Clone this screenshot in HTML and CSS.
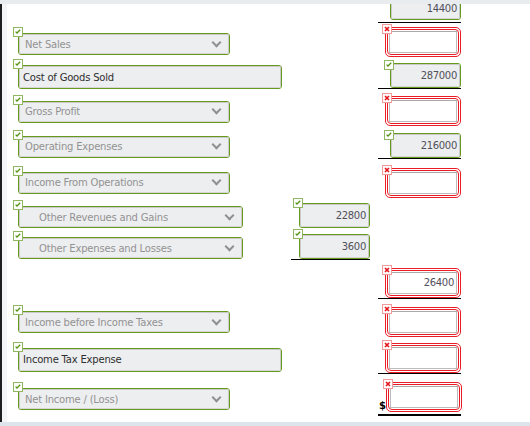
FILE: index.html
```html
<!DOCTYPE html>
<html>
<head>
<meta charset="utf-8">
<link rel="stylesheet" href="styles.css">
</head>
<body>
<div class="topbar"></div>
<div class="frame">
  <div class="sheet">
    <!-- row 0 -->
    <div class="c1"></div>
    <div class="c2"></div>
    <div class="c3 ul clip"><div class="fld"><div class="gbox num cut"><div class="gin">14400</div></div></div></div>

    <!-- row 1 -->
    <div class="c1"><div class="fld"><span class="badge ok"></span><div class="gbox sel"><div class="gin"><span>Net Sales</span><span class="chev"></span></div></div></div></div>
    <div class="c2"></div>
    <div class="c3"><div class="fld"><span class="badge bad"></span><div class="rbox"><div class="rin"><div class="rinp"></div></div></div></div></div>

    <!-- row 2 -->
    <div class="c1"><div class="fld"><span class="badge ok"></span><div class="gbox txt"><div class="gin">Cost of Goods Sold</div></div></div></div>
    <div class="c2"></div>
    <div class="c3 ul"><div class="fld"><span class="badge ok gr"></span><div class="gbox num"><div class="gin">287000</div></div></div></div>

    <!-- row 3 -->
    <div class="c1"><div class="fld"><span class="badge ok"></span><div class="gbox sel"><div class="gin"><span>Gross Profit</span><span class="chev"></span></div></div></div></div>
    <div class="c2"></div>
    <div class="c3"><div class="fld"><span class="badge bad"></span><div class="rbox"><div class="rin"><div class="rinp"></div></div></div></div></div>

    <!-- row 4 -->
    <div class="c1"><div class="fld"><span class="badge ok"></span><div class="gbox sel"><div class="gin"><span>Operating Expenses</span><span class="chev"></span></div></div></div></div>
    <div class="c2"></div>
    <div class="c3 ul"><div class="fld"><span class="badge ok gr"></span><div class="gbox num"><div class="gin">216000</div></div></div></div>

    <!-- row 5 -->
    <div class="c1"><div class="fld"><span class="badge ok"></span><div class="gbox sel"><div class="gin"><span>Income From Operations</span><span class="chev"></span></div></div></div></div>
    <div class="c2"></div>
    <div class="c3"><div class="fld"><span class="badge bad"></span><div class="rbox"><div class="rin"><div class="rinp"></div></div></div></div></div>

    <!-- row 6 -->
    <div class="c1"><div class="fld"><span class="badge ok"></span><div class="gbox sel wide"><div class="gin"><span>Other Revenues and Gains</span><span class="chev"></span></div></div></div></div>
    <div class="c2"><div class="fld"><span class="badge ok gm"></span><div class="gbox num"><div class="gin">22800</div></div></div></div>
    <div class="c3"></div>

    <!-- row 7 -->
    <div class="c1"><div class="fld"><span class="badge ok"></span><div class="gbox sel wide"><div class="gin"><span>Other Expenses and Losses</span><span class="chev"></span></div></div></div></div>
    <div class="c2 ul"><div class="fld"><span class="badge ok gm"></span><div class="gbox num"><div class="gin">3600</div></div></div></div>
    <div class="c3"></div>

    <!-- row 8 -->
    <div class="c1"></div>
    <div class="c2"></div>
    <div class="c3 ul"><div class="fld"><span class="badge bad"></span><div class="rbox"><div class="rin"><div class="rinp">26400</div></div></div></div></div>

    <!-- row 9 -->
    <div class="c1"><div class="fld"><span class="badge ok"></span><div class="gbox sel"><div class="gin"><span>Income before Income Taxes</span><span class="chev"></span></div></div></div></div>
    <div class="c2"></div>
    <div class="c3"><div class="fld"><span class="badge bad"></span><div class="rbox"><div class="rin"><div class="rinp"></div></div></div></div></div>

    <!-- row 10 -->
    <div class="c1"><div class="fld"><span class="badge ok"></span><div class="gbox txt"><div class="gin">Income Tax Expense</div></div></div></div>
    <div class="c2"></div>
    <div class="c3 ul"><div class="fld"><span class="badge bad"></span><div class="rbox"><div class="rin"><div class="rinp"></div></div></div></div></div>

    <!-- row 11 -->
    <div class="c1"><div class="fld"><span class="badge ok"></span><div class="gbox sel"><div class="gin"><span>Net Income / (Loss)</span><span class="chev"></span></div></div></div></div>
    <div class="c2"></div>
    <div class="c3 dbl spread"><span class="dollar">$</span><div class="fld"><span class="badge bad"></span><div class="rbox"><div class="rin"><div class="rinp"></div></div></div></div></div>
  </div>
</div>
<div class="bottombar"></div>
</body>
</html>
```

FILE: styles.css
```css
html, body {
  margin: 0;
  padding: 0;
  background: #ffffff;
  overflow: hidden;
  width: 530px;
  height: 426px;
}

.topbar {
  height: 4px;
  background: #e8ecef;
}

.frame {
  height: 418px;
  border-left: 2px solid #1e1e1e;
  box-sizing: border-box;
}

.sheet {
  height: 100%;
  box-sizing: border-box;
  border-left: 5px solid #f3f5f7;
  display: grid;
  grid-template-columns: 276px 79px 83px;
  column-gap: 8px;
  grid-template-rows: 19px 34px 32px 37px 33px 39px 30px 32px 39px 38px 37px 42px;
  align-content: start;
  font-family: "DejaVu Sans", "Liberation Sans", sans-serif;
  font-size: 10px;
}

.c1 {
  align-self: center;
  margin-top: 8px;
  padding-left: 11px;
}

.c2, .c3 {
  display: flex;
  justify-content: flex-end;
  align-items: flex-end;
}

.ul {
  border-bottom: 1px solid #000;
}

.clip {
  overflow: hidden;
  padding-bottom: 2px;
}

.dbl {
  border-bottom: 2px solid #000;
  padding-bottom: 2px;
}

.spread {
  justify-content: space-between;
}

.dollar {
  font-family: "DejaVu Sans", sans-serif;
  font-size: 10px;
  font-weight: bold;
  line-height: 10px;
  color: #000;
  padding-left: 1px;
  margin-bottom: 1px;
}

.fld {
  position: relative;
  flex: none;
}

/* green-validated fields */
.gbox {
  border: 1px solid #669a1e;
  border-radius: 3px;
  box-sizing: border-box;
  background: #fff;
}

.gin {
  height: 100%;
  box-sizing: border-box;
  border: 1px solid #cacaca;
  border-bottom-color: #d6d6d6;
  border-radius: 2px;
  background: #edeef0;
  white-space: nowrap;
  overflow: hidden;
}

.sel {
  width: 212px;
  height: 22px;
}

.sel.wide {
  width: 225px;
}

.sel .gin {
  display: flex;
  align-items: center;
  justify-content: space-between;
  padding-left: 5px;
  padding-right: 6px;
  color: #929292;
  letter-spacing: -0.2px;
}

.sel.wide .gin {
  padding-left: 19px;
}

.chev {
  width: 5px;
  height: 5px;
  border-right: 2px solid #909090;
  border-bottom: 2px solid #909090;
  transform: rotate(45deg);
  margin-top: -4px;
  margin-right: 2px;
}

.txt {
  width: 264px;
  height: 24px;
}

.txt .gin {
  display: flex;
  align-items: center;
  padding-left: 3px;
  color: #2e2e2e;
  letter-spacing: -0.2px;
}

.num {
  width: 71px;
  height: 25px;
}

.num .gin {
  text-align: right;
  padding-right: 2px;
  line-height: 21px;
  color: #50505a;
  letter-spacing: -0.3px;
}

.num.cut {
  height: 19px;
}

.num.cut .gin {
  line-height: 11px;
}

/* red-marked fields */
.rbox {
  width: 76px;
  height: 30px;
  box-sizing: border-box;
  border: 1px solid #ea1c24;
  border-radius: 5px;
  padding: 1px;
  background: #fff;
}

.rin {
  height: 100%;
  box-sizing: border-box;
  border: 1px solid #ea1c24;
  border-radius: 4px;
  padding: 1px;
}

.rinp {
  height: 100%;
  box-sizing: border-box;
  border: 1px solid #bcbcbc;
  border-top-color: #a9a9a9;
  background: #fff;
  text-align: right;
  padding-right: 2px;
  line-height: 20px;
  color: #50505a;
  letter-spacing: -0.3px;
}

/* badges */
.badge {
  position: absolute;
  width: 10px;
  height: 10px;
  box-sizing: border-box;
  background-color: #fff;
  background-repeat: no-repeat;
  background-position: center;
  z-index: 2;
}

.badge.ok {
  left: -5px;
  top: -6px;
  border: 1px solid #8fb760;
  background-image: url("data:image/svg+xml;utf8,<svg xmlns='http://www.w3.org/2000/svg' width='8' height='8' viewBox='0 0 8 8'><path d='M1.6 3.6 L3 5 L6.2 1.8' fill='none' stroke='%23549415' stroke-width='1.3'/></svg>");
}

.badge.ok.gr {
  left: -6px;
  top: -3px;
}

.badge.ok.gm {
  left: -6px;
  top: -5px;
}

.badge.bad {
  left: -3px;
  top: -3px;
  border: 1px solid #f29a9a;
  background-image: url("data:image/svg+xml;utf8,<svg xmlns='http://www.w3.org/2000/svg' width='8' height='8' viewBox='0 0 8 8'><path d='M2 2 L6 6 M6 2 L2 6' fill='none' stroke='%23e3131b' stroke-width='1.6'/></svg>");
}

.bottombar {
  height: 4px;
  background: #dee4eb;
}
```
